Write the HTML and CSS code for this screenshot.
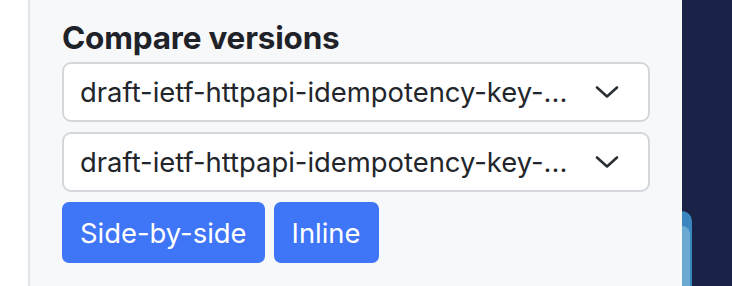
FILE: index.html
```html
<!DOCTYPE html>
<html lang="en">
<head>
<meta charset="utf-8">
<title>Compare versions</title>
<link rel="stylesheet" href="styles.css">
</head>
<body>
<div class="page">
  <div class="gutter"></div>
  <aside class="panel">
    <h2 class="panel-title">Compare versions</h2>
    <div class="select">
      <span class="select-text">draft-ietf-httpapi-idempotency-key-...</span>
      <svg class="chevron" viewBox="0 0 24 12" width="24" height="12" aria-hidden="true"><path d="M2 1.5 L12 10.5 L22 1.5" fill="none" stroke="#2b2f36" stroke-width="2.6" stroke-linecap="round" stroke-linejoin="round"/></svg>
    </div>
    <div class="select">
      <span class="select-text">draft-ietf-httpapi-idempotency-key-...</span>
      <svg class="chevron" viewBox="0 0 24 12" width="24" height="12" aria-hidden="true"><path d="M2 1.5 L12 10.5 L22 1.5" fill="none" stroke="#2b2f36" stroke-width="2.6" stroke-linecap="round" stroke-linejoin="round"/></svg>
    </div>
    <div class="actions">
      <button class="btn">Side-by-side</button>
      <button class="btn">Inline</button>
    </div>
  </aside>
  <div class="backdrop">
    <div class="shape shape-back"></div>
    <div class="shape shape-front"></div>
  </div>
</div>
</body>
</html>
```
FILE: styles.css
```css
html, body {
  margin: 0;
  padding: 0;
  background: #ffffff;
}
.page {
  display: flex;
  width: 732px;
  height: 286px;
  overflow: hidden;
  font-family: Inter, "Noto Sans", sans-serif;
}
.gutter {
  width: 28px;
  flex: none;
  background: #ffffff;
}
.panel {
  width: 620px;
  flex: none;
  background: #f7f8fa;
  border-left: 2px solid #e1e4e8;
  padding: 20px 0 0 32px;
  display: flex;
  flex-direction: column;
  gap: 10px;
}
.panel-title {
  margin: 0 0 -4px 0;
  font-size: 31.5px;
  line-height: 36px;
  font-weight: 700;
  color: #1f2329;
  letter-spacing: -0.2px;
}
.select {
  box-sizing: border-box;
  width: 588px;
  height: 60px;
  background: #ffffff;
  border: 2px solid #d4d7dc;
  border-radius: 9px;
  display: flex;
  align-items: center;
  padding: 0 29px 0 16px;
}
.select-text {
  flex: 1;
  font-size: 27.4px;
  color: #22262b;
  white-space: nowrap;
}
.chevron {
  flex: none;
}
.actions {
  display: flex;
  gap: 9px;
}
.btn {
  font-family: inherit;
  height: 61px;
  border: none;
  border-radius: 7px;
  background: #3f75f7;
  color: #ffffff;
  font-size: 27.4px;
  padding: 0 18px;
}
.backdrop {
  flex: 1;
  background: #1b2247;
  position: relative;
  overflow: hidden;
}
.shape {
  position: absolute;
  left: 0;
  width: 10px;
  border-radius: 0 10px 0 0;
}
.shape-back {
  top: 211px;
  height: 90px;
  background: #3c86c0;
}
.shape-front {
  top: 226px;
  width: 8px;
  height: 80px;
  background: #6aaad2;
  border-radius: 0 8px 0 0;
}
```
